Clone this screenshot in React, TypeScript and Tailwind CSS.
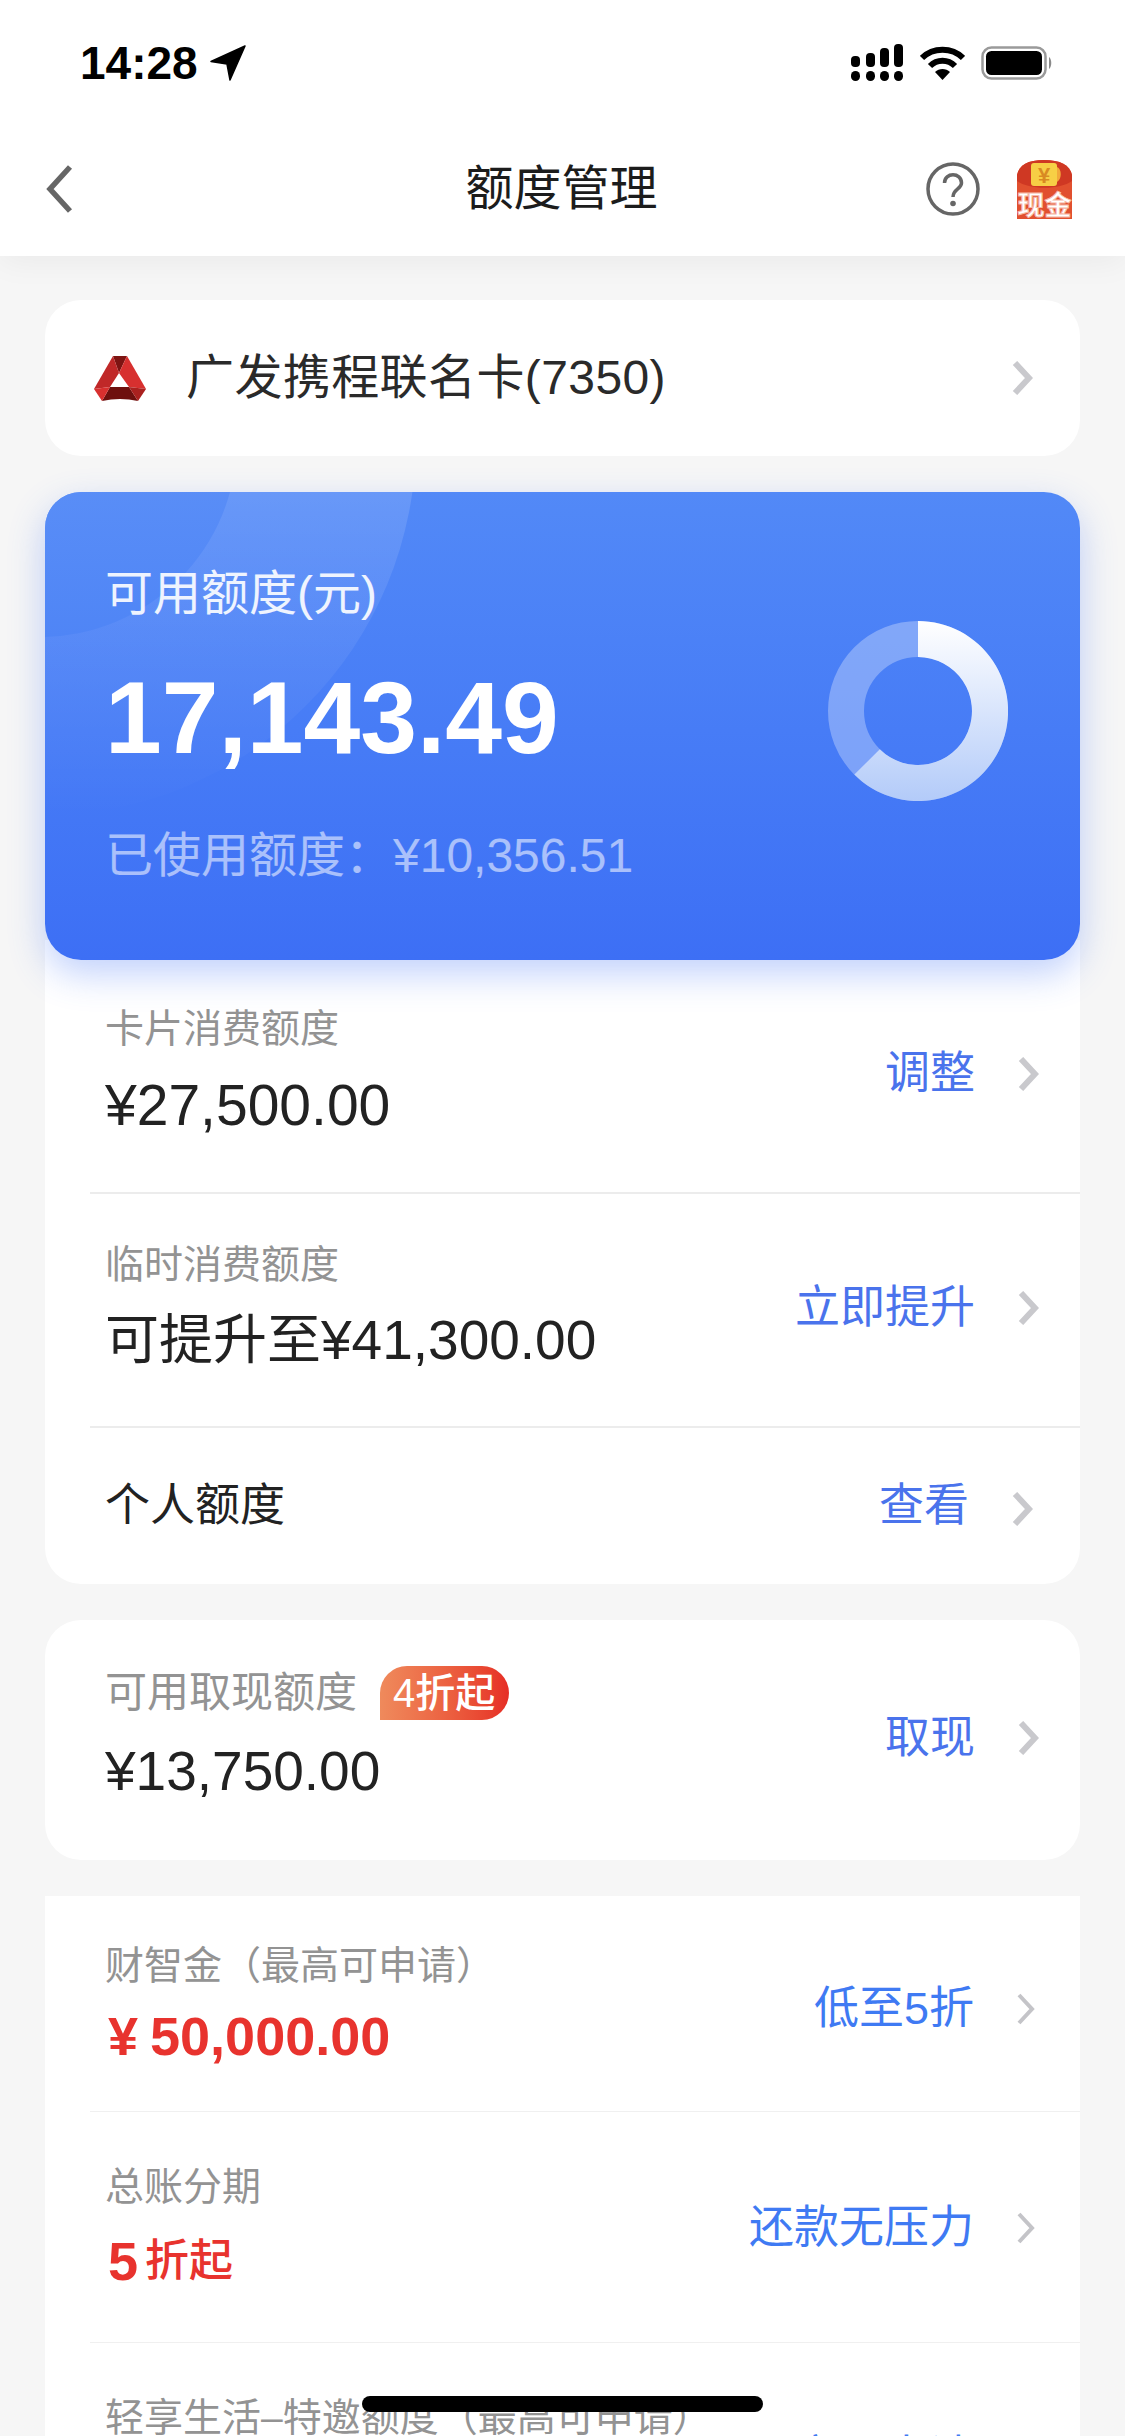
import React from "react";

function Chevron({ thin = false }: { thin?: boolean }) {
  return thin ? (
    <svg width="20" height="32" viewBox="0 0 20 32" className="shrink-0">
      <path d="M3 2 L16 16 L3 30" fill="none" stroke="#c4c4c8" strokeWidth="4" />
    </svg>
  ) : (
    <svg width="22" height="34" viewBox="0 0 22 34" className="shrink-0">
      <path d="M4 2 L18 17 L4 32" fill="none" stroke="#c9c9cd" strokeWidth="6" />
    </svg>
  );
}

function Action({ text }: { text: string }) {
  return (
    <div className="flex items-center gap-[42px] pr-[41px] mb-[4px]">
      <span className="text-[45px] leading-[60px] text-[#4a73ec]">{text}</span>
      <Chevron />
    </div>
  );
}

function LightAction({ text, shift }: { text: string; shift: string }) {
  return (
    <div className={`flex items-center gap-[42px] pr-[44px] ${shift}`}>
      <span className="text-[45px] leading-[60px] text-[#3f7af3]">{text}</span>
      <Chevron thin />
    </div>
  );
}

function StatusBar() {
  return (
    <div className="h-[126px] flex items-center justify-between pl-[80px] pr-[72px]">
      <div className="flex items-center gap-[12px]">
        <span className="text-[46px] leading-[50px] font-bold text-black">14:28</span>
        <svg width="36" height="36" viewBox="0 0 36 36">
          <path d="M35 1 L1 16.5 L17 19 L20 35 Z" fill="#000" stroke="#000" strokeWidth="1.5" strokeLinejoin="round" />
        </svg>
      </div>
      <div className="flex items-center gap-[16px]">
        <svg width="53" height="38" viewBox="0 0 53 38">
          <rect x="0" y="12" width="9" height="11" rx="4" />
          <rect x="15" y="9" width="9" height="14" rx="4" />
          <rect x="29" y="4" width="9" height="19" rx="4" />
          <rect x="43" y="0" width="9" height="23" rx="4" />
          <rect x="0" y="27" width="9" height="10" rx="4.5" />
          <rect x="15" y="27" width="9" height="10" rx="4.5" />
          <rect x="29" y="27" width="9" height="10" rx="4.5" />
          <rect x="43" y="27" width="9" height="10" rx="4.5" />
        </svg>
        <svg width="45" height="34" viewBox="0 0 45 34">
          <path d="M2 12 C13 1 32 1 43 12" fill="none" stroke="#000" strokeWidth="6" />
          <path d="M10 20 C17 13 28 13 35 20" fill="none" stroke="#000" strokeWidth="6" />
          <path d="M15 26 C19 22 26 22 30 26 L22.5 34 Z" fill="#000" />
        </svg>
        <svg width="72" height="34" viewBox="0 0 72 34">
          <rect x="1.5" y="1.5" width="63" height="31" rx="9" fill="none" stroke="#9a9a9a" strokeWidth="2.5" />
          <rect x="5" y="5" width="56" height="24" rx="5.5" fill="#000" />
          <path d="M68 11 C71 13 71 21 68 23 Z" fill="#8a8a8a" />
        </svg>
      </div>
    </div>
  );
}

function RedPacket() {
  return (
    <svg width="57" height="60" viewBox="0 0 57 60">
      <path d="M1 16 C3 6 12 1 28 1 C44 1 54 6 56 16 L56 60 L1 60 Z" fill="#e1502f" />
      <path d="M1 16 C3 6 12 1 28 1 C44 1 54 6 56 16 L56 22 C44 31 13 31 1 22 Z" fill="#cf3823" />
      <rect x="15" y="4" width="26" height="23" rx="3" fill="#f7cf45" />
      <path d="M41 8 C46 10 46 20 41 23 Z" fill="#f2a93a" />
      <text x="28" y="24" textAnchor="middle" fontSize="22" fontWeight="700" fill="#d98a22">¥</text>
      <text x="28.5" y="56" textAnchor="middle" fontSize="27" fontWeight="700" fill="#fff" stroke="#f6b7a6" strokeWidth="1">现金</text>
    </svg>
  );
}

function Logo() {
  return (
    <svg width="52" height="45" viewBox="0 0 52 45" className="shrink-0">
      <polygon points="19,0 33,0 25,17" fill="#7d1412" />
      <polygon points="19,0 0,33 16,31 25,17" fill="#c02828" />
      <polygon points="33,0 52,33 35,31 25,17" fill="#d7302f" />
      <path d="M16 31 L35 31 L44 45 Q26 41 8 45 Z" fill="#6e100e" />
      <polygon points="0,33 16,31 8,45" fill="#d8302f" />
      <polygon points="52,33 35,31 44,45" fill="#aa211f" />
    </svg>
  );
}

function Donut() {
  return (
    <svg width="180" height="180" viewBox="0 0 180 180">
      <defs>
        <linearGradient id="ring" x1="0" y1="0" x2="0" y2="1">
          <stop offset="0" stopColor="#ffffff" />
          <stop offset="1" stopColor="#b3cbf9" />
        </linearGradient>
      </defs>
      <circle cx="90" cy="90" r="72" fill="none" stroke="#ffffff" strokeOpacity="0.3" strokeWidth="36" />
      <path
        d="M90 0 A90 90 0 1 1 26.4 153.6 L51.8 128.2 A54 54 0 1 0 90 36 Z"
        fill="url(#ring)"
      />
    </svg>
  );
}

export default function App() {
  return (
    <div className="relative w-[1125px] h-[2436px] overflow-hidden bg-[#f6f6f6] text-[#222222] font-['Liberation_Sans','Noto_Sans_CJK_SC',sans-serif]">
      <header className="relative z-10 h-[256px] bg-white shadow-[0_6px_30px_rgba(0,0,0,0.05)]">
        <StatusBar />
        <div className="h-[124px] grid grid-cols-[1fr_auto_1fr] items-center px-[52px] pt-[2px]">
          <svg width="28" height="50" viewBox="0 0 28 50" className="-ml-[7px]">
            <path d="M25 3 L5 25 L25 47" fill="none" stroke="#666666" strokeWidth="5.5" />
          </svg>
          <div className="text-[48px] leading-[60px] text-[#1c1c1c] -ml-[2px]">额度管理</div>
          <div className="flex items-center justify-end gap-[36px]">
            <svg width="54" height="54" viewBox="0 0 54 54">
              <circle cx="27" cy="27" r="25" fill="none" stroke="#666666" strokeWidth="3.5" />
              <path d="M18.5 21 C18.5 10 35.5 10 35.5 21 C35.5 27 27 27 27 35" fill="none" stroke="#666666" strokeWidth="3.5" />
              <circle cx="27" cy="41.5" r="2.8" fill="#666666" />
            </svg>
            <RedPacket />
          </div>
        </div>
      </header>

      <main className="px-[45px] pt-[44px]">
        <section className="h-[156px] rounded-[36px] bg-white flex items-center justify-between pl-[49px] pr-[47px]">
          <div className="flex items-center gap-[40px]">
            <Logo />
            <span className="text-[48px] leading-[60px] tracking-[0.4px] text-[#2a2a2a]">广发携程联名卡(7350)</span>
          </div>
          <Chevron />
        </section>

        <section className="relative z-[1] mt-[36px] h-[468px] rounded-[36px] overflow-hidden bg-gradient-to-b from-[#5289f7] to-[#3d6ff5] shadow-[0_14px_36px_rgba(61,111,245,0.32)] flex items-start justify-between pl-[60px] pr-[72px] pt-[72px]">
          <div className="absolute -left-[381px] -top-[428px] w-[752px] h-[752px] rounded-full bg-gradient-to-b from-white/30 to-white/0" />
          <div className="absolute -left-[202px] -top-[249px] w-[394px] h-[394px] rounded-full bg-gradient-to-b from-[#6a9bf8] to-[#4f85f6]" />
          <div className="relative flex flex-col">
            <div className="text-[48px] leading-[60px] text-white/90">可用额度(元)</div>
            <div className="mt-[34px] text-[102px] leading-[120px] font-bold text-white">17,143.49</div>
            <div className="mt-[48px] text-[48px] leading-[60px] text-white/55">已使用额度：¥10,356.51</div>
          </div>
          <div className="relative mt-[57px]">
            <Donut />
          </div>
        </section>

        <section className="relative -mt-[20px] pt-[20px] rounded-b-[36px] bg-white">
          <div className="h-[232px] flex items-center justify-between pl-[60px]">
            <div className="flex flex-col pb-[2px]">
              <div className="text-[39px] leading-[60px] text-[#939393]">卡片消费额度</div>
              <div className="text-[57px] leading-[92px] text-[#222222]">¥27,500.00</div>
            </div>
            <Action text="调整" />
          </div>
          <div className="ml-[45px] h-[2px] bg-[#ececec]" />
          <div className="h-[232px] flex items-center justify-between pl-[60px]">
            <div className="flex flex-col pt-[14px]">
              <div className="text-[39px] leading-[60px] text-[#939393]">临时消费额度</div>
              <div className="leading-[90px] text-[#222222]"><span className="text-[54px]">可提升至</span><span className="text-[55px]">¥41,300.00</span></div>
            </div>
            <Action text="立即提升" />
          </div>
          <div className="ml-[45px] h-[2px] bg-[#ececec]" />
          <div className="h-[156px] flex items-center justify-between pl-[60px]">
            <div className="text-[45px] leading-[60px] text-[#222222]">个人额度</div>
            <div className="flex items-center gap-[42px] pr-[47px]">
              <span className="text-[45px] leading-[60px] text-[#4a73ec]">查看</span>
              <span className="pt-[6px] flex"><Chevron /></span>
            </div>
          </div>
        </section>

        <section className="mt-[36px] h-[240px] rounded-[36px] bg-white flex items-center justify-between pl-[60px]">
          <div className="flex flex-col pb-[5px]">
            <div className="flex items-center gap-[23px]">
              <span className="text-[42px] leading-[60px] text-[#939393]">可用取现额度</span>
              <span className="h-[54px] w-[129px] pl-[13px] flex items-center rounded-tl-[27px] rounded-tr-[27px] rounded-br-[27px] bg-gradient-to-r from-[#ef8a5c] to-[#e62d25] text-[40px] font-medium text-white whitespace-nowrap">4折起</span>
            </div>
            <div className="mt-[7px] text-[55px] leading-[82px] text-[#222222]">¥13,750.00</div>
          </div>
          <Action text="取现" />
        </section>

        <section className="mt-[36px] bg-white">
          <div className="h-[215px] flex items-center justify-between pl-[60px]">
            <div className="flex flex-col pt-[4px]">
              <div className="text-[39px] leading-[60px] text-[#939393]">财智金（最高可申请）</div>
              <div className="pl-[3px] text-[54px] leading-[80px] font-bold text-[#e8332e] flex items-center gap-[12px]"><span>¥</span><span>50,000.00</span></div>
            </div>
            <LightAction text="低至5折" shift="mt-[10px]" />
          </div>
          <div className="ml-[45px] h-[1px] bg-[#f0f0f0]" />
          <div className="h-[230px] pt-[2px] flex items-center justify-between pl-[60px]">
            <div className="flex flex-col pt-[5px]">
              <div className="text-[39px] leading-[60px] text-[#939393]">总账分期</div>
              <div className="pl-[3px] leading-[88px] font-bold text-[#e8332e] flex items-center gap-[7px]"><span className="text-[54px]">5</span><span className="text-[44px] font-medium">折起</span></div>
            </div>
            <LightAction text="还款无压力" shift="mt-0" />
          </div>
          <div className="ml-[45px] h-[1px] bg-[#f0f0f0]" />
          <div className="h-[230px] flex items-center justify-between pl-[60px]">
            <div className="flex flex-col">
              <div className="text-[39px] leading-[60px] text-[#939393]">轻享生活–特邀额度（最高可申请）</div>
              <div className="text-[54px] leading-[80px] font-bold text-[#e8332e]">¥ 30,000.00</div>
            </div>
            <LightAction text="立即申请" shift="mt-0" />
          </div>
        </section>
      </main>

      <div className="absolute left-[362px] top-[2396px] z-20 w-[401px] h-[16px] rounded-full bg-black" />
    </div>
  );
}
